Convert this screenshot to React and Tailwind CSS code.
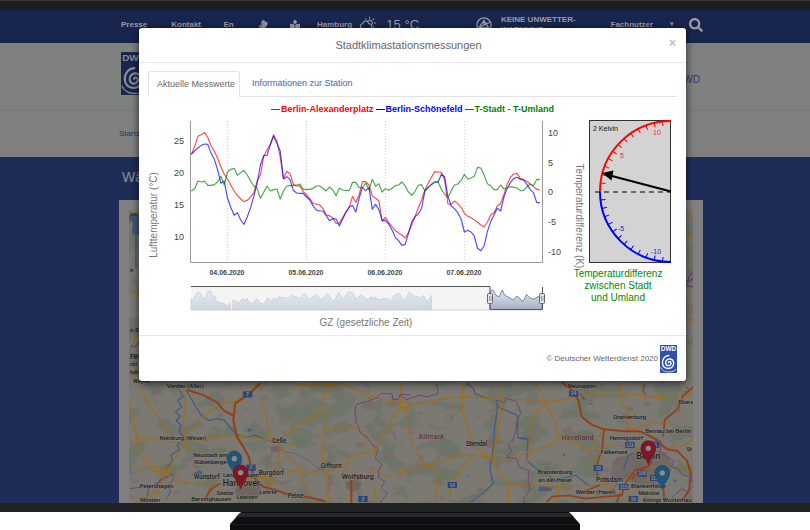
import { FaBookReader, FaSearch, FaSignLanguage } from "react-icons/fa";
import { WiDayCloudy } from "react-icons/wi";

// hourly readings, stored as heights on the plot
const CITY = [
  118, 95, 64, 59, 53, 67, 93, 109, 130, 156, 178, 192, 210, 228, 241, 252, 260, 256, 246, 234, 198, 180, 124, 105,
  87, 59, 78, 125, 190, 169, 176, 208, 213, 212, 230, 240, 250, 266, 267, 270, 280, 300, 302, 309, 325, 324, 308, 291,
  277, 244, 262, 240, 200, 200, 210, 242, 250, 257, 318, 307, 323, 335, 347, 354, 360, 369, 353, 330, 305, 278, 255,
  225, 205, 187, 170, 171, 172, 195, 267, 268, 258, 266, 277, 295, 304, 308, 314, 322, 330, 336, 321, 300, 293, 273,
  266, 239, 208, 187, 177, 175, 191, 194, 199, 207, 215, 223, 225,
];
const SUBURB = [
  118, 108, 99, 91, 87, 88, 115, 133, 165, 205, 198, 250, 277, 301, 293, 315, 328, 306, 278, 244, 205, 150, 122, 121,
  90, 64, 85, 107, 192, 185, 194, 226, 234, 235, 235, 246, 255, 273, 285, 288, 288, 302, 317, 311, 312, 333, 312, 292,
  276, 271, 291, 250, 217, 227, 217, 283, 268, 284, 317, 316, 327, 345, 367, 377, 391, 388, 355, 320, 305, 297, 280,
  228, 217, 208, 201, 202, 178, 185, 245, 273, 281, 293, 312, 351, 346, 351, 363, 400, 407, 393, 350, 320, 300, 280,
  288, 247, 220, 202, 191, 187, 193, 195, 208, 223, 233, 263, 263,
];
const DIFFERENCE = [
  228, 221, 198, 201, 198, 211, 211, 209, 201, 184, 210, 171, 163, 160, 181, 173, 166, 180, 198, 213, 220, 250, 232,
  213, 228, 224, 222, 252, 228, 213, 211, 212, 210, 207, 223, 223, 223, 220, 213, 213, 220, 228, 216, 225, 242, 220,
  225, 226, 227, 202, 202, 217, 218, 204, 225, 193, 214, 206, 231, 221, 226, 220, 212, 210, 201, 213, 231, 241, 229,
  211, 209, 228, 218, 209, 201, 200, 223, 237, 248, 227, 210, 207, 197, 178, 192, 189, 184, 157, 159, 180, 206, 212,
  224, 224, 210, 222, 219, 215, 217, 219, 227, 226, 216, 207, 212, 193, 194,
];

const toPoints = (values) => values.map((y, i) => `${34 + i * 9.87},${y}`).join(" ");

const SERIES = [
  { name: "Berlin-Alexanderplatz", values: CITY, color: "#ff0000", text: "text-[#ff0000]" },
  { name: "Berlin-Schönefeld", values: SUBURB, color: "#0000ff", text: "text-[#0000ff]" },
  { name: "T-Stadt - T-Umland", values: DIFFERENCE, color: "#008000", text: "text-[#008000]" },
];

const DAYS = [
  { label: "04.06.2020", x: 227 },
  { label: "05.06.2020", x: 306 },
  { label: "06.06.2020", x: 385 },
  { label: "07.06.2020", x: 464 },
];

function DwdLogo({ className, blue, white }) {
  return (
    <svg viewBox="0 0 34 56" className={className} role="img" aria-label="DWD">
      <rect width="34" height="56" fill={blue} />
      <text x="17" y="11" textAnchor="middle" fontSize="13" fontWeight="700" fill={white}>
        DWD
      </text>
      <path
        d="M17 35c1-3 5-2 5 1.500c0 4-4 5.500-7 4.500c-4-1.500-5-7-2-10.500c4-4.500 12-3 14 3c2 7-3 13-9.500 13.500c-7 0-12-4-12.500-10.500C4.500 28 10 21 17.500 21"
        fill="none"
        stroke={white}
        strokeWidth="2.800"
        strokeLinecap="round"
      />
      <path d="M1 44c4 9 11 10 16 10c7 0 12-2 15-5" fill="none" stroke={white} strokeWidth="1.500" />
    </svg>
  );
}

function TopBar() {
  return (
    <header className="h-[33px] shrink-0 bg-[#18264f] pb-1 pl-4 text-[#9b9da5]">
      <div className="mx-auto grid h-full max-w-[584px] grid-cols-[50fr_52fr_34fr_32fr_27fr_42fr_27fr_89fr_25fr_109fr_58fr_20fr_16fr] items-center whitespace-nowrap text-[8px] font-bold *:min-w-0">
        <a href="#presse">Presse</a>
        <a href="#kontakt">Kontakt</a>
        <a href="#en">En</a>
        <a href="#gebaerdensprache" aria-label="Gebärdensprache">
          <FaSignLanguage size={10} />
        </a>
        <a href="#leichte-sprache" aria-label="Leichte Sprache">
          <FaBookReader size={10} />
        </a>
        <span>Hamburg</span>
        <WiDayCloudy size={18} />
        <span className="text-[13px] font-normal">15 °C</span>
        <svg viewBox="0 0 18 18" className="size-4" fill="none" stroke="currentColor" strokeWidth="1.500">
          <circle cx="9" cy="9" r="8" />
          <path d="M9 3v7M3 12l6-3 6-3M3 12h11l-5-8z" />
        </svg>
        <span className="leading-[10px]">
          KEINE UNWETTER-
          <br />
          WARNUNG
        </span>
        <select aria-label="Zielgruppe" className="appearance-none bg-transparent">
          <option>Fachnutzer</option>
        </select>
        <span className="text-[6px]">▼</span>
        <button type="button" aria-label="Suche">
          <FaSearch size={14} />
        </button>
      </div>
    </header>
  );
}

const MAP_LABELS_WEST = [
  ["Verden (Aller)", 226, 54, 18],
  ["Weyhe", 94, 39, 17],
  ["Nienburg (Weser)", 219, 210, 18],
  ["Celle", 508, 218, 19],
  ["Neustadt am", 301, 260, 18],
  ["Rübenberge", 301, 283, 18],
  ["Langenhagen", 393, 320, 18],
  ["Burgdorf", 484, 316, 19],
  ["Wunstorf", 290, 328, 19],
  ["Gifhorn", 664, 295, 19],
  ["Wolfsburg", 743, 326, 21],
  ["Hannover", 394, 349, 26],
  ["Petershagen", 139, 353, 18],
  ["Seelze", 345, 375, 17],
  ["Lehrte", 474, 373, 18],
  ["Laatzen", 411, 388, 18],
  ["Peine", 557, 383, 19],
  ["Barsinghausen", 304, 394, 18],
  ["Minden", 120, 396, 18],
];
const MAP_LABELS_EAST = [
  ["Neuruppin", 545, 54, 18],
  ["Ebers", 858, 103, 18],
  ["Oranienburg", 689, 148, 18],
  ["Bernau bei Berlin", 805, 188, 18],
  ["Hennigsdorf", 679, 210, 18],
  ["Stendal", 230, 229, 19],
  ["St", 868, 242, 18],
  ["Falkensee", 642, 252, 18],
  ["Berlin", 745, 268, 28],
  ["Brandenburg", 465, 313, 18],
  ["an der Havel", 465, 336, 18],
  ["Potsdam", 628, 336, 20],
  ["Blankenfelde", 745, 353, 18],
  ["Werder (Havel)", 587, 372, 18],
  ["Mahlow", 747, 376, 18],
  ["Königs Wusterhau", 802, 395, 18],
];

function MapLabels({ items }) {
  return (
    <g
      textAnchor="middle"
      fontWeight="500"
      fill="#1c1c1c"
      stroke="#85837d"
      strokeWidth="3"
      paintOrder="stroke"
      className="font-[Roboto,sans-serif]"
    >
      {items.map(([name, x, y, size]) => (
        <text key={name} x={x} y={y} fontSize={size}>
          {name}
        </text>
      ))}
    </g>
  );
}

function Shield({ x, y, n }) {
  return (
    <g>
      <rect x={x - 14} y={y - 9} width="28" height="18" fill="#2c4777" />
      <text x={x} y={y + 5} textAnchor="middle" fontSize="14" fontWeight="700" fill="#8b93a3">
        {n}
      </text>
    </g>
  );
}

function Pin({ x, y, fill, stroke }) {
  return (
    <g transform={`translate(${x} ${y})`}>
      <path
        d="M0 0C-4-20-22-30-22-50a22 22 0 0 1 44 0C22-30 4-20 0 0z"
        fill={fill}
        stroke={stroke}
        strokeWidth="2"
      />
      <circle cy="-49" r="8" fill="#8b8b88" />
    </g>
  );
}

function StationMap() {
  return (
    <svg viewBox="129 210 564 293" className="block w-full" role="img" aria-label="Karte der Stationen">
      <defs>
        <filter id="woods" x="0" y="0" width="100%" height="100%" colorInterpolationFilters="sRGB">
          <feTurbulence type="fractalNoise" baseFrequency="0.035 0.05" numOctaves="4" seed="11" />
          <feColorMatrix values="0 0 0 0 0.420  0 0 0 0 0.450  0 0 0 0 0.400  12 0 0 0 -6.500" />
        </filter>
        <filter id="towns" x="0" y="0" width="100%" height="100%" colorInterpolationFilters="sRGB">
          <feTurbulence type="fractalNoise" baseFrequency="0.08" numOctaves="2" seed="5" />
          <feColorMatrix values="0 0 0 0 0.490  0 0 0 0 0.400  0 0 0 0 0.390  0 16 0 0 -11.200" />
        </filter>
      </defs>
      <rect x="129" y="210" width="564" height="293" fill="#7b7972" />
      <rect x="129" y="210" width="564" height="293" filter="url(#woods)" opacity="0.7" />
      <rect x="129" y="210" width="564" height="293" filter="url(#towns)" opacity="0.7" />

      {/* strips left and right of the dialog */}
      <g fill="none" strokeWidth="1.300">
        <path d="M129 216h10v18h-6v-12h-4zM136 235v33" fill="#3f5878" stroke="#3f5878" />
        <path d="M129 220l5 5M129 290c4 1 6 3 10 5M131 350c2-8 5-15 8-17M129 379c5-4 7-8 10-9" stroke="#9b6a20" />
        <path d="M686 212l7 8M686 230c3 4 4 9 7 11M686 298c3 4 4 9 7 11M693 318l-7 9" stroke="#9b6a20" />
        <path d="M693 273c-8 3-1 8-7 8M693 278c-3 4-7 4-7 8l7 1" stroke="#743f80" />
        <path d="M131 345c2 4 6 1 8-3" stroke="#743f80" />
      </g>
      <g fontSize="6" fontWeight="500" fill="#1c1c1c" className="font-[Roboto,sans-serif]">
        <text x="130" y="216">ver</text>
        <text x="130" y="272">n</text>
        <text x="130" y="332">z-Sch</text>
        <text x="130" y="359" fontSize="9">ren</text>
        <text x="130" y="366">rst</text>
        <text x="130" y="374">tuhr</text>
      </g>

      {/* Weser to Wolfsburg */}
      <g transform="translate(110 370) scale(0.3333)">
        <g fill="#6c5c5a" opacity="0.7">
          <path d="M380 350l30-10 40 5 5 25-20 20-35-5-25-15z" />
          <path d="M710 335l25-8 20 12-5 18-25 8-18-12zM480 230l30-3 12 12-20 8-18-4z" />
        </g>
        <g fill="#6c7566" opacity="0.7">
          <path d="M520 120l40-25 60-10 40 20 60-40 20 20-30 50-60 10-50 30-50-20-30 10zM470 60l50-10 30 20-40 20z" />
          <path d="M540 170l50 5 30 25-50 20-40-20zM400 220l50-10 30 20-50 20z" />
        </g>
        <g stroke="#465d80" strokeWidth="4" fill="none" strokeLinejoin="round">
          <path d="M208 60l12 20-18 12 14 18-20 15 15 12-12 16 14 12-6 18 16 22-22 20 8 14-26 16 4 18-16 20-4 24-22 20-30 20-4 30-6 20" />
          <path d="M228 60l24 40 20 34 26 18 22-6 22 4 20 24 16 18 26 10 32-6 20 8 20 8 28 6" />
          <path d="M522 245l30 4 40 20 30 26 30 6" strokeWidth="2" />
          <path d="M414 178l10 4" strokeWidth="8" />
          <path d="M250 312l20-10 6 8-16 10z" fill="#465d80" />
        </g>
        <g stroke="#9b6e24" strokeWidth="4" fill="none" strokeLinejoin="round">
          <path d="M60 95l4 30 10 50 10 35 4 40 40 42 30 30 10 20M60 215l20-10 40 0 50 10 56 0 66-4 30-12 46-2 60 6 70 10 60 12" />
          <path d="M90 50l30 60 40 50 20 40M222 60l4 40-6 60 6 60M226 218l-40 60-12 20-20 40-20 50" />
          <path d="M232 190l60-60 40-28 44-8 30-20 46-36M452 38l4 60 14 40 6 50 30 40 36 40 30 30 10 50 30 50" />
          <path d="M526 200l30-30 60-34 24-22 4-50 38-24M530 300l60 10 60-8 40-10M640 115l2 80-6 60 14 50 6 90" />
          <path d="M642 182l60-12 40 6 50 50 4 20-50 4-30 20-20 50M794 300l36 20 30-14 40-6M515 38l60 6 70 0 60-4 30 20 80 28 54 8 32 0" />
          <path d="M796 240l30-60 46-70 0-70M872 110l28 12M225 218l20 30M160 298l60 40 120 4 56-10 100-20 36-2" />
          <path d="M510 230l-10 80-30 50M300 345l-10 50M740 330l54-30M790 340l10 58M500 345l-30-20-40 0" />
          <path d="M84 295l50-4 50 6-20 20-10-14-30 0M80 400l60-40 30-10M372 90l-2 80" />
        </g>
        <g stroke="#93401a" strokeWidth="6" fill="none" strokeLinejoin="round">
          <path d="M232 60l50 16 40 22 20 24 30 16M450 40l-30 30-44 30-6 50 10 50 20 30 16 30 12 50 10 20 22 20 36 10 40 14 60 8 50 12M724 330l0 68" />
          <path d="M330 340l-30 20-16 30" strokeWidth="5" />
        </g>
        <g stroke="#6b4679" strokeWidth="3" fill="none">
          <path d="M900 75l-30-2-6 16-16-2-2-16-34 0-10 12-40 14-22 6-6 20 6 20-4 12 10 16 4 16 20 14 18 24 16 10-8 30 20 18-10 20 0 20 18 12-10 20 18 16-16 20-12 18" />
          <path d="M60 356l30-4M140 350l10-20 24-10 14-10 2 20-16 16 8 20-12 20" />
        </g>
        <Shield x={413} y={73} n="7" />
        <Shield x={423} y={293} n="2" />
        <Shield x={759} y={387} n="2" />
        <MapLabels items={MAP_LABELS_WEST} />
        <Pin x={373} y={315} fill="#1e5578" stroke="#174766" />
        <Pin x={392} y={357} fill="#7f1626" stroke="#69111f" />
      </g>

      {/* Altmark to Berlin */}
      <g transform="translate(400 370) scale(0.3333)">
        <path d="M640 270l50-20 50-20 60 20 20 40-30 50-60 10-50-20-50-10z" fill="#70605e" opacity="0.6" />
        <g stroke="#465d80" strokeWidth="4" fill="none" strokeLinejoin="round">
          <path d="M200 40l20 14 6 18 30 10 34 8 2 30-8 50-4 60-10 70 10 40-30 30-34 24-10 16" />
          <path d="M292 110l60 26 2 66 40 4M354 204l30 6-4 60 26 24 40 20 20 20 40-14 20-4 40 30" />
          <path d="M735 40l-6 20 10 20M540 70l14 20M670 300l14-40 14-10M820 330l10 4" strokeWidth="5" />
          <path d="M420 350l40 0-10 12-34-2zM860 50l6 8M570 100l8 4M490 250l6 10" fill="#465d80" />
        </g>
        <g stroke="#9b6e24" strokeWidth="4" fill="none" strokeLinejoin="round">
          <path d="M0 115l40-10 60-14 60-8 30-4 90 8 160 4M188 38l0 90 20 60 20 40 30 30M0 310l40-14 30-14 30 0 80-28 60 4 40 12 60-4 50-24 50-12 40-30" />
          <path d="M0 110l20 20 6 60 20 50 26 40 34 20 4 50-4 48M220 256l-40 40-28 60-4 40M305 40l-4 90-20 130 4 30 40 50 0 58" />
          <path d="M408 40l30 60 20 40 20 60 40 20 50 20 24 40M440 96l-40 40-10 50 0 60-10 30M440 96l90-12 40-16 60 8 90-2 110 10 50-14" />
          <path d="M325 345l80 0 50 6 60-4 70 0 60-8 60-20 24-16M475 345l0 50M660 40l4 50 20 40-4 40 40 20" />
          <path d="M580 240l60-14 60 0 40 30M720 30l8 50 60 6M800 236l60-12 20-20M690 340l-6 60M745 290l60 2 74 4M700 350l30 20 10 28" />
          <path d="M250 260l40-4M610 180l-40 60M680 180l80-20 60-6M740 300l10 50 6 40M640 345l-40 50" />
        </g>
        <g stroke="#93401a" strokeWidth="6" fill="none" strokeLinejoin="round">
          <path d="M485 36l30 24 20 30 10 50 30 24 36 14 60 6 50 0 40 20 40 34 30 4 30 30 12 40-6 50-20 30" />
          <path d="M880 50l-10 10-20 16-16 40-40 34-4 50M612 180l-6 60-14 40 0 50M440 396l16-16 50-4 50 10 60-6 50-4 10-36 30-40 40-10 20-40" strokeWidth="5" />
          <path d="M740 290l-30 20-16 20M790 350l4 48M600 345l-50 20M660 370l-10 28" strokeWidth="5" />
        </g>
        <g stroke="#6b4679" strokeWidth="3" fill="none" strokeLinejoin="round">
          <path d="M0 75l20 14 40-14 20 6 34-10-4-30M200 36l20 20M290 90l24 8 4-14 30 10 8 16 6 20-10 20-4 30-8 28-16 14 10 20-14 20 30 4 8 26 30 10-4 30 6 28-20 26 8 26" />
          <path d="M650 270l10-10M740 240l30-34 14 10-4 30 20 14 24 14-10 16 20 6 14 20 20 4 16 24-20 20-20-6-24 20-10 16" />
          <path d="M660 320l-14 30-10 10" />
        </g>
        <Shield x={521} y={71} n="24" />
        <Shield x={157} y={345} n="14" />
        <Shield x={595} y={294} n="10" />
        <Shield x={690} y={225} n="111" />
        <Shield x={764} y={225} n="11" />
        <Shield x={727} y={311} n="100" />
        <Shield x={764} y={324} n="113" />
        <Shield x={671} y={351} n="115" />
        <Shield x={700} y={387} n="10" />
        <MapLabels items={MAP_LABELS_EAST} />
        <g fontSize="20" letterSpacing="1" fill="#602736" textAnchor="middle" className="font-[Roboto,sans-serif]">
          <text x="94" y="207">Altmark</text>
          <text x="533" y="210">Havelland</text>
        </g>
        <Pin x={745} y={284} fill="#7f1626" stroke="#69111f" />
        <Pin x={787} y={358} fill="#1e5578" stroke="#174766" />
      </g>
    </svg>
  );
}

function WeatherChart() {
  return (
    <svg viewBox="148 117 420 218" className="min-w-0 flex-[420]" role="img" aria-label="Temperaturverlauf">
      <defs>
        <linearGradient id="overview" x1="0" y1="0" x2="0" y2="1">
          <stop offset="0" stopColor="#e6e9ef" />
          <stop offset="1" stopColor="#cfd4dd" />
        </linearGradient>
        <linearGradient id="selected" x1="0" y1="0" x2="0" y2="1">
          <stop offset="0" stopColor="#e3e8f0" />
          <stop offset="1" stopColor="#a3afc4" />
        </linearGradient>
      </defs>

      {DAYS.map((day) => (
        <g key={day.label}>
          <line x1={day.x + 0.5} x2={day.x + 0.5} y1="121" y2="262" stroke="#d0d0d0" strokeDasharray="1 2" />
          <text x={day.x} y="275" textAnchor="middle" fontSize="7" fontWeight="700" fill="#444444">
            {day.label}
          </text>
        </g>
      ))}

      <g transform="translate(180 115) scale(0.3333)" fill="none" strokeWidth="3.500" strokeLinejoin="round">
        {SERIES.map((s) => (
          <polyline key={s.name} points={toPoints(s.values)} stroke={s.color} strokeOpacity="0.7" />
        ))}
      </g>
      <path d="M190.500 121V262.500H542.500V121" fill="none" stroke="#999999" />

      <g fontSize="9" fill="#444444">
        <g textAnchor="end">
          <text x="184" y="144">25</text>
          <text x="184" y="176">20</text>
          <text x="184" y="208">15</text>
          <text x="184" y="240">10</text>
        </g>
        <text x="548" y="136">10</text>
        <text x="548" y="166">5</text>
        <text x="548" y="195">0</text>
        <text x="548" y="225">-5</text>
        <text x="548" y="255">-10</text>
      </g>

      {/* range selector */}
      <rect x="191" y="287" width="299" height="23" fill="#f4f4f4" />
      <g transform="translate(110 100) scale(0.3333)" strokeWidth="3" strokeLinejoin="round">
        <path
          d="M243 629L243 598 250 598 262 576 270 578 280 596 288 592 295 573 303 576 308 590 314 588 320 604 330 608 345 612 352 618 362 608 372 600 382 606 388 608 398 595 404 604 410 594 418 608 428 610 440 595 450 610 462 612 474 594 482 602 494 594 502 600 506 590 518 594 526 592 534 598 546 584 552 592 558 590 568 596 584 580 598 598 618 584 632 598 640 596 652 580 668 602 674 602 686 577 700 598 715 576 728 578 738 598 754 584 768 596 776 600 786 592 792 598 796 592 804 600 777 596 784 590 790 594 796 590 804 600 818 596 834 596 842 604 854 586 866 580 884 602 898 576 912 588 924 590 934 596 940 586 950 604 958 598 964 586 964 629z"
          fill="url(#overview)"
          stroke="#ccd2dc"
        />
        <path
          d="M1140 629V575l8-5 12 18 8 2 9-20 7 16 16 8 10 6 10-12 8 6 8 10 6-4 8-17 10 11 10 4 14-8 6 2 6-7V629z"
          fill="url(#selected)"
          stroke="#7484a3"
        />
      </g>
      <path d="M231.500 301V310" stroke="#f4f4f4" />
      <path d="M191 310H490" stroke="#cfcfcf" />
      <path d="M191 286.500H490V309.500H542.500V287" fill="none" stroke="#555555" />
      {[490, 542].map((x) => (
        <g key={x} fill="#e4e4e4" stroke="#666666">
          <rect x={x - 2.5} y="293.500" width="5" height="10" rx="1" />
          <path d={`M${x - 0.5} 296v5M${x + 1} 296v5`} strokeWidth="0.500" />
        </g>
      ))}

      <g fontSize="10" fill="#777777" textAnchor="middle">
        <text transform="translate(157 215) rotate(-90)">Lufttemperatur (°C)</text>
        <text x="366" y="326">
          GZ (gesetzliche Zeit)
        </text>
      </g>
    </svg>
  );
}

function DifferenceGauge() {
  const ticks = [];
  for (let k = -12; k <= 12; k++) {
    if (k !== 0) ticks.push(k);
  }

  return (
    <svg viewBox="568 117 109 218" className="min-w-0 flex-[109]" role="img" aria-label="Temperaturdifferenz">
      <text transform="translate(576 216) rotate(90)" textAnchor="middle" fontSize="10" fill="#777777">
        Temperaturdifferenz (K)
      </text>
      <rect x="589.500" y="120.500" width="81" height="142" fill="#d3d3d3" stroke="#333333" />
      <path d="M595 192H671" stroke="#000000" strokeDasharray="5 4" strokeWidth="1.200" />
      {ticks.map((k) => (
        <path
          key={k}
          d="M600 191.500h5"
          transform={`rotate(${(k * 90) / 13} 671 191.500)`}
          stroke={k > 0 ? "#ff0000" : "#0000ff"}
        />
      ))}
      <path d="M671 121A71 70.500 0 0 0 600 191.500" fill="none" stroke="#ff0000" strokeWidth="2" />
      <path d="M600 191.500A71 70.500 0 0 0 671 262" fill="none" stroke="#0000ff" strokeWidth="2" />
      <path d="M671 191.500L610 175.500" stroke="#000000" strokeWidth="2" />
      <path d="M602 173l11.500-2.500-2 10z" />
      <text x="593" y="131" fontSize="7" fill="#111111">
        2 Kelvin
      </text>
      <g fontSize="7" textAnchor="middle">
        <g fill="#e03030">
          <text x="657" y="135">10</text>
          <text x="622" y="158">5</text>
        </g>
        <g fill="#2020e0">
          <text x="621" y="231">-5</text>
          <text x="656" y="254">-10</text>
        </g>
      </g>
      <g fontSize="10" fill="#008a00" textAnchor="middle">
        <text x="618" y="277">Temperaturdifferenz</text>
        <text x="618" y="289">zwischen Stadt</text>
        <text x="618" y="301">und Umland</text>
      </g>
    </svg>
  );
}

function StationDialog() {
  return (
    <div
      role="dialog"
      aria-labelledby="dialog-title"
      className="mx-auto max-w-[547px] rounded-[3px] bg-white text-[#666666] shadow-[0_2px_8px_rgba(0,0,0,0.7)]"
    >
      <div className="relative border-b border-[#e8e8e8] py-2 pr-2 text-center">
        <h1 id="dialog-title" className="text-[11px] leading-[18px]">
          Stadtklimastationsmessungen
        </h1>
        <button
          type="button"
          aria-label="Schließen"
          className="absolute top-[9px] right-[10px] text-[12px] leading-3 font-bold text-[#bbbbbb]"
        >
          ×
        </button>
      </div>

      <div className="px-[9px] pt-2">
        <div role="tablist" className="flex border-b border-[#e2e2e2] text-[9px] leading-[25px]">
          <button
            type="button"
            role="tab"
            aria-selected="true"
            className="-mb-px rounded-t-[3px] border border-b-0 border-[#e2e2e2] bg-white pr-1 pl-2"
          >
            Aktuelle Messwerte
          </button>
          <button type="button" role="tab" aria-selected="false" className="px-3 text-[#4860b0]">
            Informationen zur Station
          </button>
        </div>

        <ul className="flex justify-center gap-[2px] pt-1 text-[9px] leading-4 font-bold">
          {SERIES.map((s) => (
            <li key={s.name} className={`flex items-center gap-px ${s.text}`}>
              <span className="h-px w-[9px] bg-current" />
              {s.name}
            </li>
          ))}
        </ul>
        <div className="flex">
          <WeatherChart />
          <DifferenceGauge />
        </div>
      </div>

      <div className="flex items-center justify-end gap-[2px] border-t border-[#e8e8e8] px-[9px] pt-[9px] pb-2 text-[8px]">
        © Deutscher Wetterdienst 2020
        <DwdLogo className="h-7 w-[17px]" blue="#2f4fa8" white="#ffffff" />
      </div>
    </div>
  );
}

export default function App() {
  return (
    <div className="flex h-screen flex-col overflow-hidden bg-white font-['Liberation_Sans',Arial,sans-serif]">
      <div className="h-[10px] shrink-0 border-t border-[#34383a] bg-[#1c1e20]" />

      <div className="relative min-h-0 flex-1 overflow-hidden bg-[#808080]">
        <TopBar />
        <div className="h-[68px] border-b border-[#777777] pl-3">
          <div className="mx-auto flex h-full max-w-[600px] items-start justify-between bg-[#7c8080]/40 pt-[9px] pr-[11px] pl-[10px] text-[#2a3a70]">
            <DwdLogo className="h-[43px] w-[26px]" blue="#18264f" white="#8c8e96" />
            <a href="#dwd" className="pt-5 text-[10px]">
              DWD
            </a>
          </div>
        </div>
        <nav className="h-[46px] pl-3 text-[8px] leading-[46px] text-[#22356e]">
          <div className="mx-auto max-w-[584px]">
            <a href="#start">Startseite</a>
          </div>
        </nav>
        <main className="min-h-full bg-[#1e2d58] pl-3">
          <div className="mx-auto max-w-[584px]">
            <h2 className="px-[3px] pt-2 pb-[11px] text-[14px] leading-6 text-[#8c8e96]">Wähle</h2>
            <div className="bg-[#808080] p-[10px]">
              <StationMap />
            </div>
          </div>
        </main>

        <div className="absolute inset-0 top-[18px] pl-[15px]">
          <StationDialog />
        </div>
      </div>

      <div className="h-[9px] shrink-0 bg-[#202224]" />
      <svg viewBox="0 0 350 18" className="mx-auto h-[18px] w-[350px] shrink-0">
        <path d="M11 0H339L350 12V18H0V12z" fill="#0e0f11" />
        <path d="M10 1H340L344 5H6z" fill="#26282b" />
        <path d="M0 12.500H350" stroke="#1d1f21" />
      </svg>
    </div>
  );
}
